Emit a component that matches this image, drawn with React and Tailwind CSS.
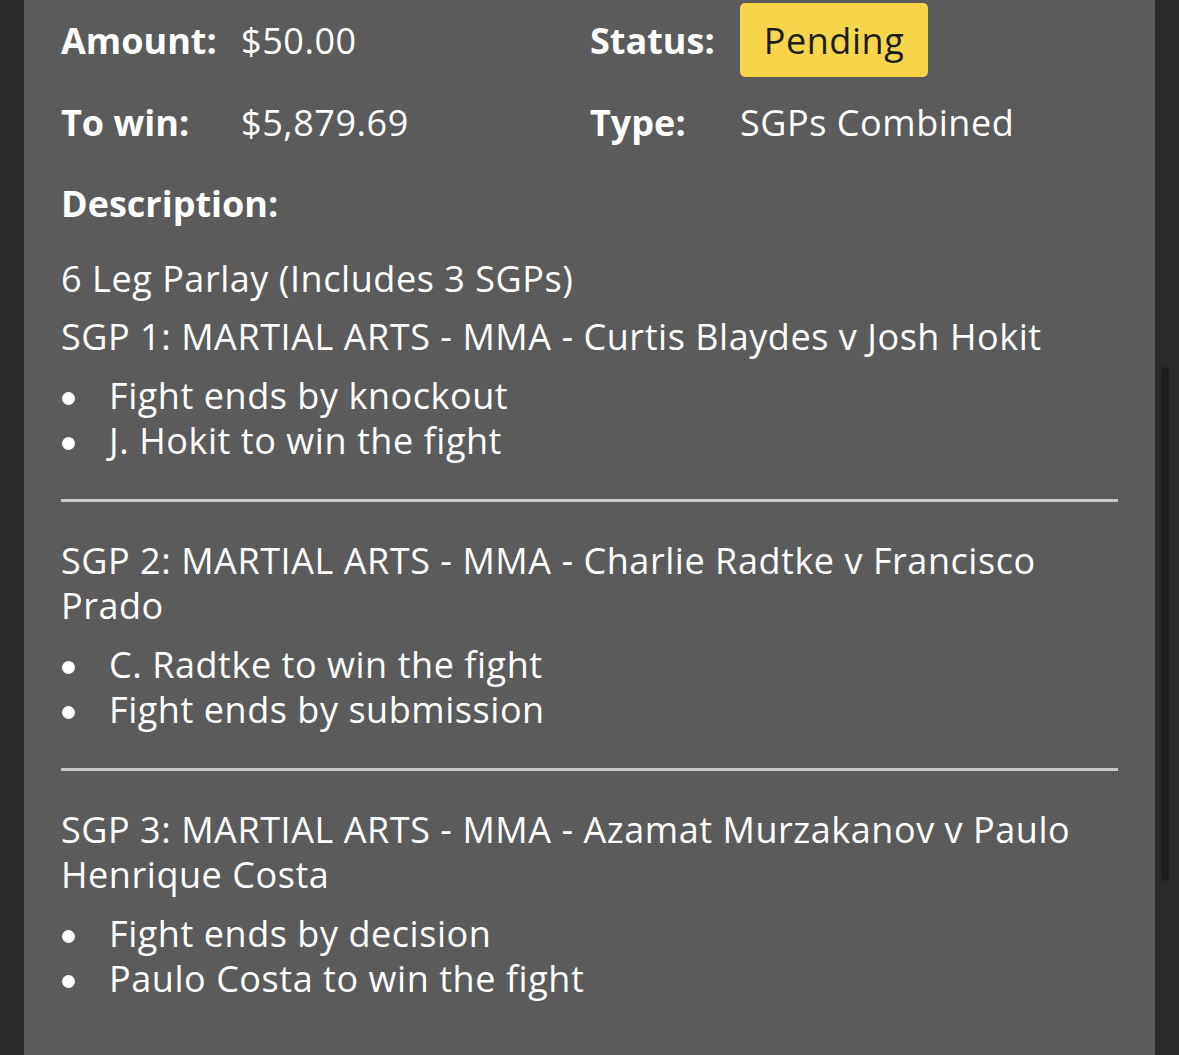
export default function App() {
  const sgps = [
    {
      title: "SGP 1: MARTIAL ARTS - MMA - Curtis Blaydes v Josh Hokit",
      legs: ["Fight ends by knockout", "J. Hokit to win the fight"],
    },
    {
      title: "SGP 2: MARTIAL ARTS - MMA - Charlie Radtke v Francisco Prado",
      legs: ["C. Radtke to win the fight", "Fight ends by submission"],
    },
    {
      title: "SGP 3: MARTIAL ARTS - MMA - Azamat Murzakanov v Paulo Henrique Costa",
      legs: ["Fight ends by decision", "Paulo Costa to win the fight"],
    },
  ];

  return (
    <div
      className="flex h-[1055px] w-[1179px] overflow-hidden bg-[#2a2a2a] text-white"
      style={{ fontFamily: '"Open Sans", "Noto Sans", sans-serif' }}
    >
      <div className="w-[24px] shrink-0" />

      <div className="flex-1 bg-[#5b5b5b] px-[37px] pt-[3px] text-[36px] leading-[45px] tracking-[0.55px]">
        <div className="flex h-[74px] items-center">
          <div className="flex w-[529px]">
            <span className="w-[180px] font-bold tracking-normal">Amount:</span>
            <span>$50.00</span>
          </div>
          <div className="flex items-center">
            <span className="w-[150px] font-bold tracking-normal">Status:</span>
            <span className="flex h-[74px] w-[188px] items-center justify-center rounded-[5px] bg-[#f7d54b] text-[#1c1c1c]">
              Pending
            </span>
          </div>
        </div>

        <div className="mt-[8px] flex h-[74px] items-center">
          <div className="flex w-[529px]">
            <span className="w-[180px] font-bold tracking-normal">To win:</span>
            <span>$5,879.69</span>
          </div>
          <div className="flex">
            <span className="w-[150px] font-bold tracking-normal">Type:</span>
            <span>SGPs Combined</span>
          </div>
        </div>

        <p className="mt-[22px] font-bold tracking-normal">Description:</p>
        <p className="mt-[30px]">6 Leg Parlay (Includes 3 SGPs)</p>

        {sgps.map((sgp, i) => (
          <div key={i}>
            {i > 0 && <div className="my-[36px] h-[3px] bg-[#c9c9c9]" />}
            <p className={i === 0 ? "mt-[13px]" : ""}>{sgp.title}</p>
            <ul className="mt-[14px]">
              {sgp.legs.map((leg) => (
                <li key={leg} className="flex items-center">
                  <span className="w-[48px] shrink-0 pt-[6px]">
                    <span className="ml-[1px] block h-[13px] w-[13px] rounded-full bg-white" />
                  </span>
                  <span>{leg}</span>
                </li>
              ))}
            </ul>
          </div>
        ))}
      </div>

      <div className="flex w-[24px] shrink-0 flex-col pl-[6px] pt-[367px]">
        <div className="h-[514px] w-[8px] rounded-full bg-[#1e1e1e]" />
      </div>
    </div>
  );
}
